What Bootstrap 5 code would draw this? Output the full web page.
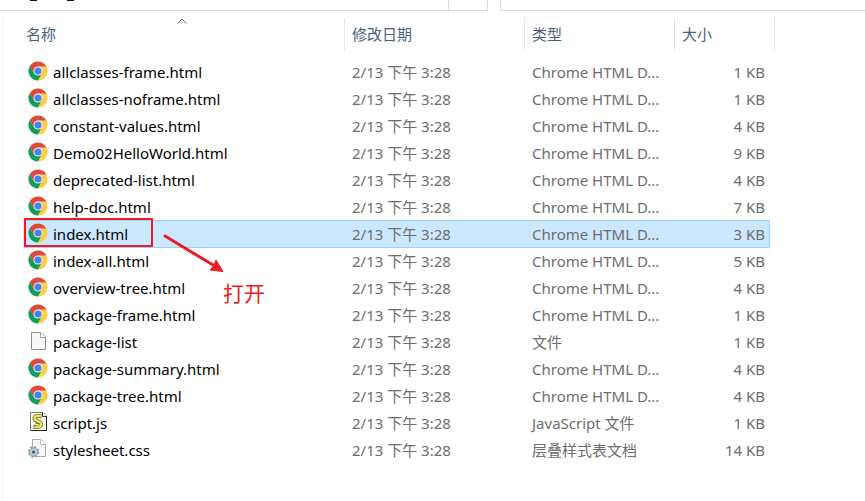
<!DOCTYPE html>
<html lang="zh-CN">
<head>
<meta charset="utf-8">
<meta name="viewport" content="width=device-width, initial-scale=1">
<title>文件列表</title>
<link href="https://cdn.jsdelivr.net/npm/bootstrap@5.3.0/dist/css/bootstrap.min.css" rel="stylesheet">
<style>
body { font-family: "Noto Sans", "Noto Sans CJK SC", sans-serif; font-size: 15px; line-height: 20px; color: #6d6d6d; background: #fff; overflow: hidden; }
.toolbar-strip { height: 11px; gap: 12px; }
.address-box, .search-box { border: 0 solid #d9d9d9; border-bottom-width: 1px; }
.address-box { flex: 488 1 0; border-right-width: 1px; }
.search-box { flex: 365 1 0; border-left-width: 1px; }
.address-tail { width: 39px; border-left: 1px solid #d9d9d9; }
.descender { width: 7px; height: 1px; margin-left: 30px; background: #111; }
.file-pane { margin: 7px 0 0 2px; padding-left: 20px; border-left: 1px solid #f2f2f2; min-height: calc(100vh - 18px); }
.file-table { table-layout: fixed; width: 752px; border-collapse: separate; border-spacing: 0; }
.file-table th, .file-table td { padding: 0; font-weight: 400; white-space: nowrap; }
.c-name { width: 322px; } .c-date { width: 180px; } .c-type { width: 150px; } .c-size { width: 95px; } .c-rest { width: 5px; }
.col-button { display: block; width: 100%; height: 32px; margin-bottom: 8px; padding: 0 0 0 7px; border: 0; border-right: 1px solid #e5e5e5; background: none; color: #4c607a; text-align: left; }
.col-button.first { padding-left: 3px; }
.sort-mark { left: 153px; top: 0; }
.file-table td { height: 27px; padding-left: 7px; }
.file-table td.size { padding: 0 5px 0 0; text-align: right; }
.file-table td.name { padding-left: 5px; color: #000; }
.file-table td.rest { padding: 0; }
.name-line { gap: 5px; }
.file-icon { width: 20px; height: 20px; flex: none; margin-top: -1px; }
.selected td:not(.rest) { background: #cce8ff; box-shadow: inset 0 1px #99d1ff, 0 1px #99d1ff; }
.selected td.size { border-right: 1px solid #99d1ff; padding-right: 4px; }
.note-frame { left: 1px; top: -2px; width: 129px; height: 29px; border: 2px solid #ed1c24; }
.note-arrow { left: 138px; top: 11px; z-index: 1; }
.note-text { left: 200px; top: 58px; z-index: 1; color: #ed1c24; font-size: 21px; line-height: 28px; font-family: "Noto Sans CJK SC", sans-serif; }
</style>
<script src="https://cdn.jsdelivr.net/npm/bootstrap@5.3.0/dist/js/bootstrap.bundle.min.js"></script>
</head>
<body>
<svg class="d-none" aria-hidden="true">
  <symbol id="chrome" viewBox="0 0 48 48">
    <circle cx="24" cy="24" r="23" fill="#fff"/>
    <path fill="#db4c3f" d="M4.1 12.5A23 23 0 0 1 43.9 12.5L44 13.5H24L14 29.5Z"/>
    <path fill="#ffcd41" d="M43.9 12.5A23 23 0 0 1 24 47L33.5 29.5L24 13.5H44.4Z"/>
    <path fill="#109d59" d="M4.1 12.5A23 23 0 0 0 24 47L33.5 29.5H14.5Z"/>
    <circle cx="24" cy="24" r="11" fill="#f1f1f1"/><circle cx="24" cy="24" r="8.6" fill="#4285f4"/>
  </symbol>
  <symbol id="blank" viewBox="0 0 20 20">
    <path d="M3.5 1.5H13L17.5 6V18.5H3.5Z" fill="#f8f8f8" stroke="#8c8c8c"/><path d="M12.5 1.5V6.5H17.5" fill="#fff" stroke="#a4a4a4"/>
  </symbol>
  <symbol id="script" viewBox="0 0 20 20">
    <path d="M2.5 .5H15L18.5 4V18.5H2.5Z" fill="#fff" stroke="#777"/><path d="M18.5 4V18.5H3" fill="none" stroke="#222"/><path d="M14.5 .5V4.500H18.5" fill="#fff" stroke="#333"/>
    <path d="M13.5 5C11 3 6 3.500 6.500 6.500C7 9 13 9.500 13.200 12C13.500 15 9 15.500 5.500 14.500" fill="none" stroke="#77753a" stroke-width="4"/>
    <path d="M13.5 5C11 3 6 3.500 6.500 6.500C7 9 13 9.500 13.200 12C13.500 15 9 15.500 5.500 14.500" fill="none" stroke="#eee650" stroke-width="2.4"/>
    <path d="M8.500 5.500H13.500M7.500 11.500H11.500M5 14H8" stroke="#77753a"/>
  </symbol>
  <symbol id="style" viewBox="0 0 20 20">
    <path d="M4.5 .5H13L17.5 5V17.5H4.5Z" fill="#f5f5f5" stroke="#aaa"/><path d="M12.5 .5V5.5H17.5" fill="#fff" stroke="#bbb"/>
    <circle cx="5.5" cy="13" r="4.8" fill="none" stroke="#8c9ba6" stroke-width="2" stroke-dasharray="2 1.77"/>
    <circle cx="5.5" cy="13" r="4.2" fill="#bccbd5" stroke="#91a1ac"/><circle cx="5.5" cy="13" r="1.6" fill="#40505c"/>
  </symbol>
</svg>

<div class="toolbar-strip d-flex">
  <div class="address-box d-flex"><span class="descender"></span><span class="descender"></span><span class="address-tail ms-auto"></span></div>
  <div class="search-box"></div>
</div>

<main class="file-pane">
  <table class="file-table">
    <colgroup><col class="c-name"><col class="c-date"><col class="c-type"><col class="c-size"><col class="c-rest"></colgroup>
    <thead>
      <tr>
        <th scope="col" class="position-relative"><button type="button" class="col-button first">名称</button>
          <svg class="sort-mark position-absolute" width="12" height="7" viewBox="0 0 12 7" aria-hidden="true"><path d="M1.5 5.5L6 1L10.500 5.5" fill="none" stroke="#666"/></svg></th>
        <th scope="col"><button type="button" class="col-button">修改日期</button></th>
        <th scope="col"><button type="button" class="col-button">类型</button></th>
        <th scope="col" colspan="2"><button type="button" class="col-button">大小</button></th>
      </tr>
    </thead>
    <tbody id="files"></tbody>
  </table>
</main>

<template id="note">
  <span class="note-frame position-absolute"></span>
  <svg class="note-arrow position-absolute" width="66" height="44" viewBox="0 0 66 44" aria-hidden="true"><path d="M4 5L52 34" stroke="#ed1c24" stroke-width="3" stroke-linecap="round"/><path d="M62 40.500L55 29L53 34.500L49 39Z" fill="#ed1c24" stroke="#ed1c24" stroke-linejoin="round"/></svg>
  <span class="note-text position-absolute">打开</span>
</template>

<script>
const html = 'Chrome HTML D...';
const files = [
  ['allclasses-frame.html', 'chrome', html, 1],
  ['allclasses-noframe.html', 'chrome', html, 1],
  ['constant-values.html', 'chrome', html, 4],
  ['Demo02HelloWorld.html', 'chrome', html, 9],
  ['deprecated-list.html', 'chrome', html, 4],
  ['help-doc.html', 'chrome', html, 7],
  ['index.html', 'chrome', html, 3],
  ['index-all.html', 'chrome', html, 5],
  ['overview-tree.html', 'chrome', html, 4],
  ['package-frame.html', 'chrome', html, 1],
  ['package-list', 'blank', '文件', 1],
  ['package-summary.html', 'chrome', html, 4],
  ['package-tree.html', 'chrome', html, 4],
  ['script.js', 'script', 'JavaScript 文件', 1],
  ['stylesheet.css', 'style', '层叠样式表文档', 14]
];
document.getElementById('files').innerHTML = files.map(([name, icon, type, size]) => `
  <tr class="${name === 'index.html' ? 'selected' : ''}">
    <td class="name position-relative"><div class="name-line d-flex align-items-center"><svg class="file-icon" aria-hidden="true"><use href="#${icon}"/></svg><span>${name}</span></div></td>
    <td>2/13 下午 3:28</td><td>${type}</td><td class="size">${size} KB</td><td class="rest"></td>
  </tr>`).join('');
document.querySelector('.selected .name').append(document.getElementById('note').content.cloneNode(true));
</script>
</body>
</html>
